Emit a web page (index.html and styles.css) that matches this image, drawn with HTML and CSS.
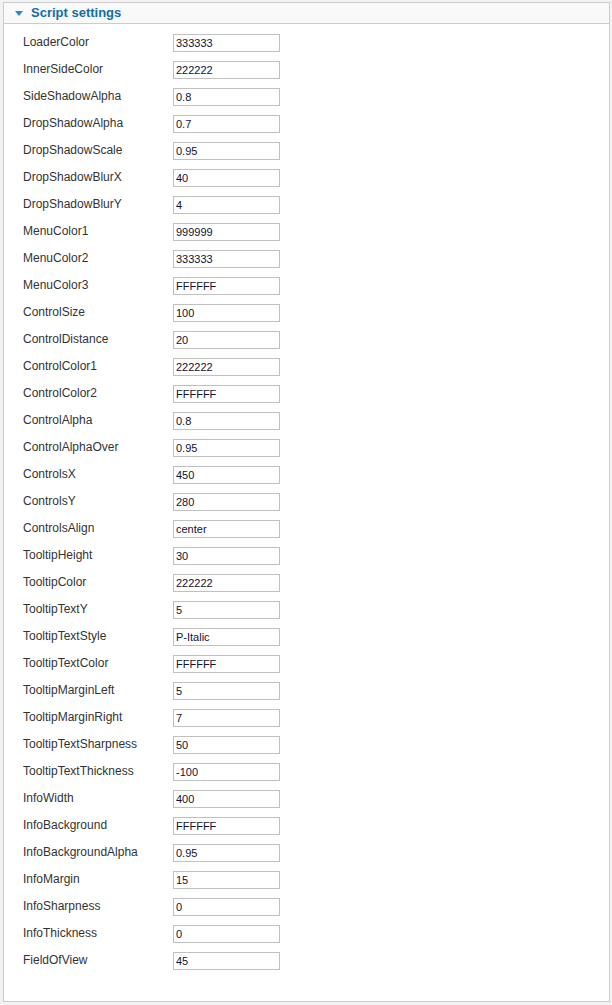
FILE: index.html
```html
<!DOCTYPE html>
<html>
<head>
<meta charset="utf-8">
<link rel="stylesheet" href="styles.css">
</head>
<body>
<div class="panel">
  <div class="panel-head">
    <span class="arrow"></span>
    <span class="title">Script settings</span>
  </div>
  <div class="panel-body">
    <div class="row"><label class="lbl">LoaderColor</label><input class="fld" type="text" value="333333"></div>
    <div class="row"><label class="lbl">InnerSideColor</label><input class="fld" type="text" value="222222"></div>
    <div class="row"><label class="lbl">SideShadowAlpha</label><input class="fld" type="text" value="0.8"></div>
    <div class="row"><label class="lbl">DropShadowAlpha</label><input class="fld" type="text" value="0.7"></div>
    <div class="row"><label class="lbl">DropShadowScale</label><input class="fld" type="text" value="0.95"></div>
    <div class="row"><label class="lbl">DropShadowBlurX</label><input class="fld" type="text" value="40"></div>
    <div class="row"><label class="lbl">DropShadowBlurY</label><input class="fld" type="text" value="4"></div>
    <div class="row"><label class="lbl">MenuColor1</label><input class="fld" type="text" value="999999"></div>
    <div class="row"><label class="lbl">MenuColor2</label><input class="fld" type="text" value="333333"></div>
    <div class="row"><label class="lbl">MenuColor3</label><input class="fld" type="text" value="FFFFFF"></div>
    <div class="row"><label class="lbl">ControlSize</label><input class="fld" type="text" value="100"></div>
    <div class="row"><label class="lbl">ControlDistance</label><input class="fld" type="text" value="20"></div>
    <div class="row"><label class="lbl">ControlColor1</label><input class="fld" type="text" value="222222"></div>
    <div class="row"><label class="lbl">ControlColor2</label><input class="fld" type="text" value="FFFFFF"></div>
    <div class="row"><label class="lbl">ControlAlpha</label><input class="fld" type="text" value="0.8"></div>
    <div class="row"><label class="lbl">ControlAlphaOver</label><input class="fld" type="text" value="0.95"></div>
    <div class="row"><label class="lbl">ControlsX</label><input class="fld" type="text" value="450"></div>
    <div class="row"><label class="lbl">ControlsY</label><input class="fld" type="text" value="280"></div>
    <div class="row"><label class="lbl">ControlsAlign</label><input class="fld" type="text" value="center"></div>
    <div class="row"><label class="lbl">TooltipHeight</label><input class="fld" type="text" value="30"></div>
    <div class="row"><label class="lbl">TooltipColor</label><input class="fld" type="text" value="222222"></div>
    <div class="row"><label class="lbl">TooltipTextY</label><input class="fld" type="text" value="5"></div>
    <div class="row"><label class="lbl">TooltipTextStyle</label><input class="fld" type="text" value="P-Italic"></div>
    <div class="row"><label class="lbl">TooltipTextColor</label><input class="fld" type="text" value="FFFFFF"></div>
    <div class="row"><label class="lbl">TooltipMarginLeft</label><input class="fld" type="text" value="5"></div>
    <div class="row"><label class="lbl">TooltipMarginRight</label><input class="fld" type="text" value="7"></div>
    <div class="row"><label class="lbl">TooltipTextSharpness</label><input class="fld" type="text" value="50"></div>
    <div class="row"><label class="lbl">TooltipTextThickness</label><input class="fld" type="text" value="-100"></div>
    <div class="row"><label class="lbl">InfoWidth</label><input class="fld" type="text" value="400"></div>
    <div class="row"><label class="lbl">InfoBackground</label><input class="fld" type="text" value="FFFFFF"></div>
    <div class="row"><label class="lbl">InfoBackgroundAlpha</label><input class="fld" type="text" value="0.95"></div>
    <div class="row"><label class="lbl">InfoMargin</label><input class="fld" type="text" value="15"></div>
    <div class="row"><label class="lbl">InfoSharpness</label><input class="fld" type="text" value="0"></div>
    <div class="row"><label class="lbl">InfoThickness</label><input class="fld" type="text" value="0"></div>
    <div class="row"><label class="lbl">FieldOfView</label><input class="fld" type="text" value="45"></div>
  </div>
</div>
</body>
</html>
```
FILE: styles.css
```css
html, body {
  margin: 0;
  padding: 0;
  background: #f2f2f2;
}
body {
  padding: 2px 2px 3px 3px;
  font-family: "Liberation Sans", Arial, sans-serif;
}
.panel {
  width: 605px;
  border: 1px solid #cccccc;
  background: #ffffff;
}
.panel-head {
  height: 20px;
  background: #f9f9f9;
  border-bottom: 1px solid #cccccc;
  display: flex;
  align-items: center;
  padding-left: 11px;
}
.arrow {
  width: 0;
  height: 0;
  border-left: 4px solid transparent;
  border-right: 4px solid transparent;
  border-top: 5px solid #1f8ccb;
  margin-right: 8px;
  margin-top: 1px;
}
.title {
  font-size: 13px;
  font-weight: bold;
  color: #146ea5;
  line-height: 20px;
}
.panel-body {
  padding: 5px 0 27px 19px;
}
.row {
  display: flex;
  align-items: flex-start;
  height: 27px;
}
.lbl {
  width: 150px;
  font-size: 12px;
  line-height: 14px;
  margin-top: 6px;
  color: #333333;
}
.fld {
  box-sizing: border-box;
  width: 107px;
  height: 18px;
  margin: 5px 0 0 0;
  padding: 0 2px 1px;
  border: 1px solid #c0c0c0;
  background: #ffffff;
  font-family: "Liberation Sans", Arial, sans-serif;
  font-size: 11px;
  color: #111133;
  outline: none;
}
```
